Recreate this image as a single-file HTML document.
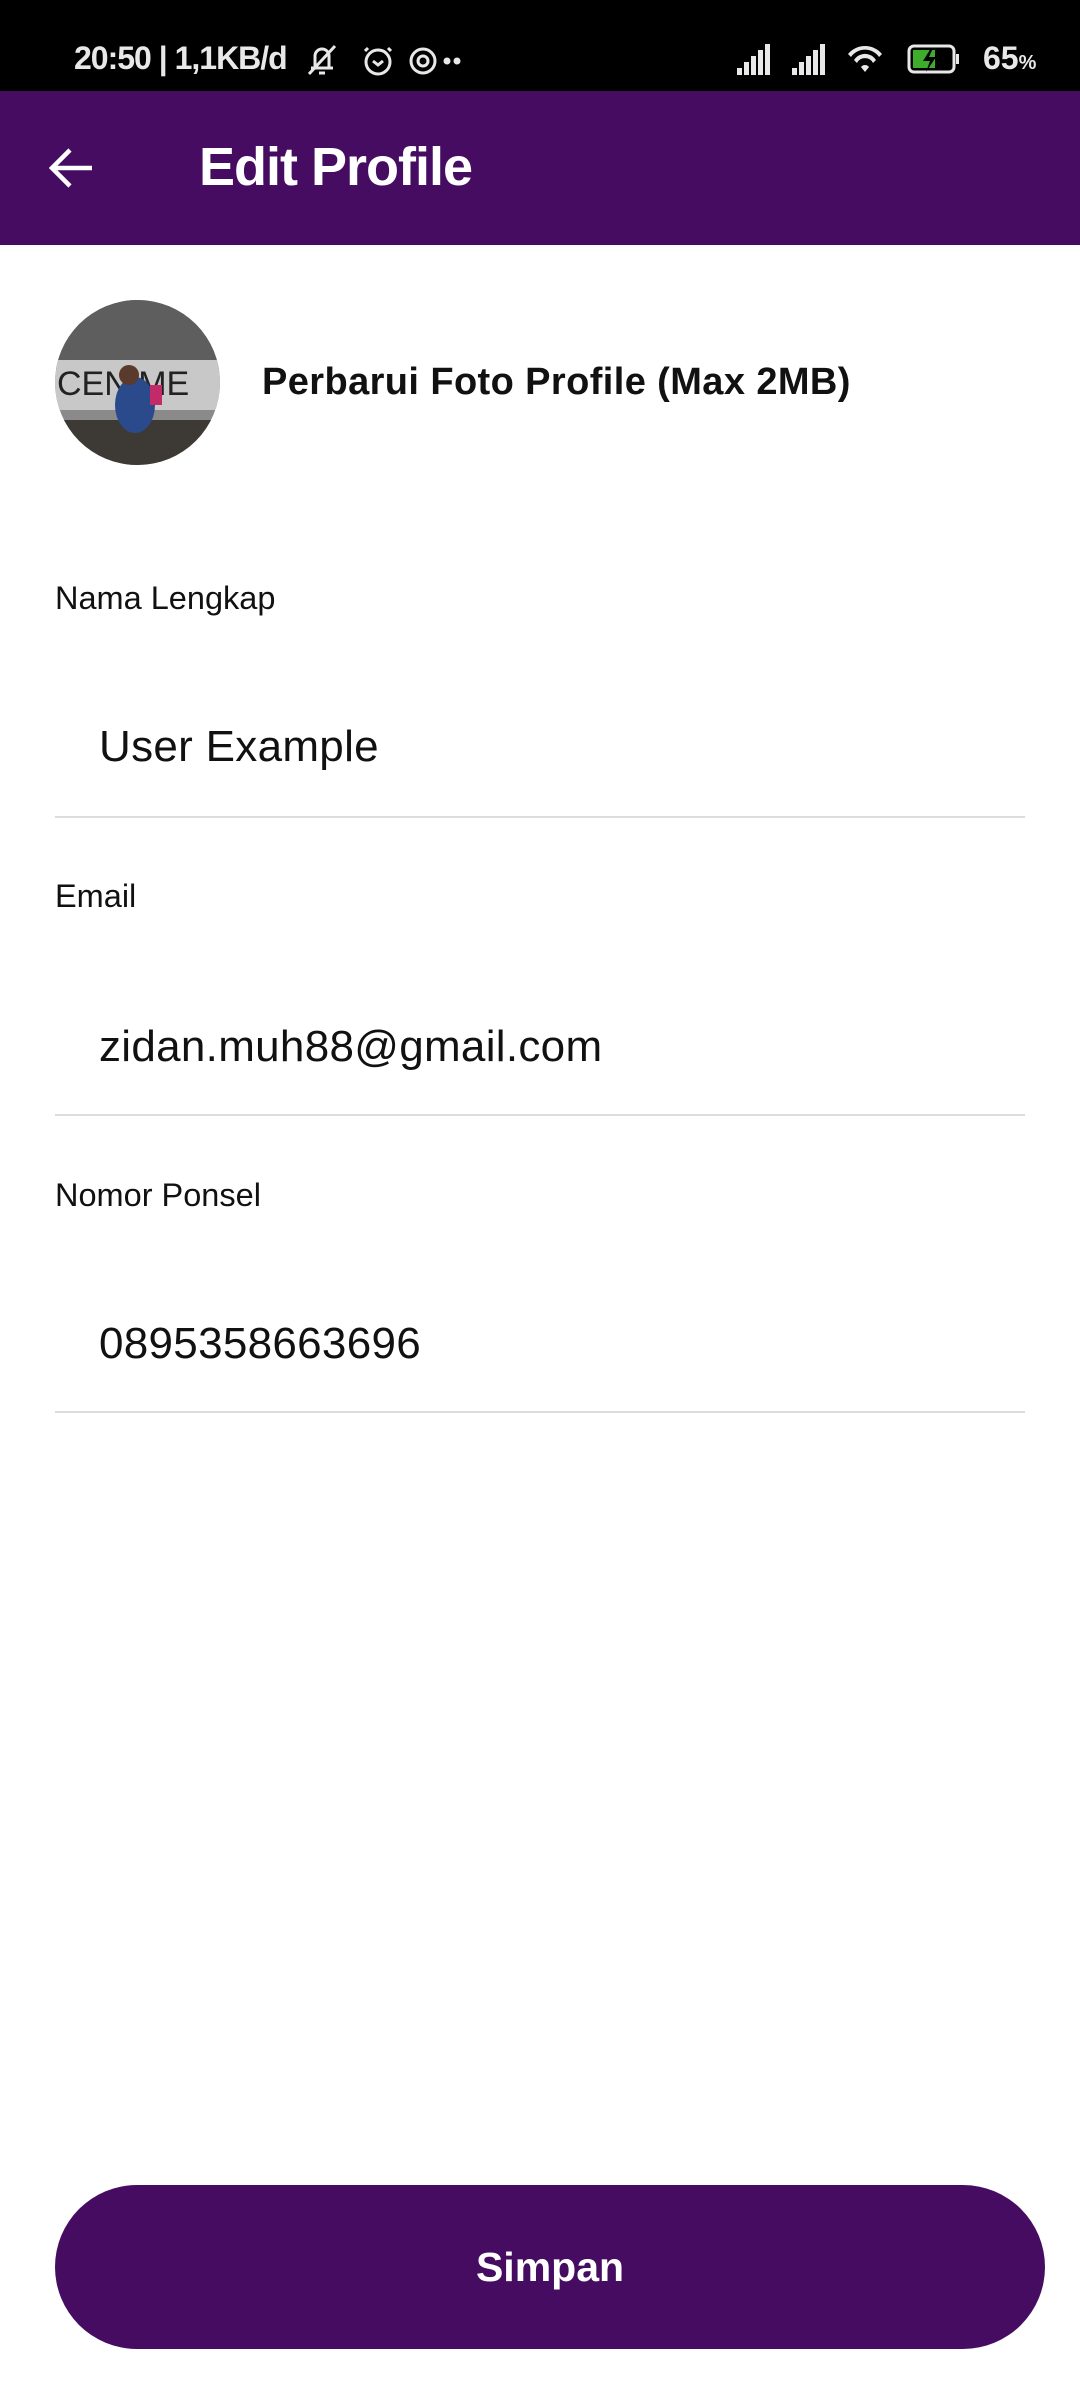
<!DOCTYPE html>
<html><head><meta charset="utf-8"><style>
*{margin:0;padding:0;box-sizing:border-box}
body{width:1080px;height:2400px;background:#fff;font-family:"Liberation Sans",sans-serif;position:relative;overflow:hidden;color:#111}
.abs{position:absolute;white-space:nowrap}
#sb{position:absolute;left:0;top:0;width:1080px;height:91px;background:#000;color:#e8e8e8}
#bar{position:absolute;left:0;top:91px;width:1080px;height:154px;background:#450c62}
.lbl{font-size:32.5px;color:#111;left:55px}
.val{font-size:44px;color:#111;left:99px;letter-spacing:0.3px}
.line{position:absolute;left:55px;width:970px;height:2px;background:#dcdcdc}
</style></head><body>
<div id="sb">
 <div class="abs" style="left:74px;top:40px;font-size:32px;font-weight:bold;letter-spacing:-1px">20:50 | 1,1KB/d</div>
 <svg class="abs" style="left:305px;top:40px" width="170" height="40" viewBox="0 0 170 40" fill="none" stroke="#e8e8e8" stroke-width="3">
  <path d="M6 28h22M10 28V16a7 7 0 0 1 14 0v12M14 33h6M4 34L30 6"/>
  <circle cx="73" cy="22" r="12"/><path d="M68 21l5 4 5-4M63 8l-3 3M83 8l3 3"/>
  <circle cx="118" cy="21" r="12"/><circle cx="118" cy="21" r="5"/>
  <circle cx="142" cy="21" r="2" fill="#e8e8e8"/><circle cx="152" cy="21" r="2" fill="#e8e8e8"/>
 </svg>
 <svg class="abs" style="left:735px;top:40px" width="240" height="38" viewBox="0 0 240 38" fill="#e8e8e8">
  <rect x="2" y="28" width="5" height="7"/><rect x="9" y="22" width="5" height="13"/><rect x="16" y="16" width="5" height="19"/><rect x="23" y="10" width="5" height="25"/><rect x="30" y="4" width="5" height="31"/>
  <rect x="57" y="28" width="5" height="7"/><rect x="64" y="22" width="5" height="13"/><rect x="71" y="16" width="5" height="19"/><rect x="78" y="10" width="5" height="25"/><rect x="85" y="4" width="5" height="31"/>
  <path d="M113 14a22 22 0 0 1 34 0l-3 3a17 17 0 0 0-28 0zM119 20a13 13 0 0 1 22 0l-3 3a9 9 0 0 0-16 0zM126 27a5 5 0 0 1 8 0l-4 5z"/>
  <rect x="174" y="6" width="45" height="26" rx="5" fill="none" stroke="#e8e8e8" stroke-width="3"/>
  <rect x="178" y="10" width="22" height="18" fill="#3dae2b"/>
  <rect x="221" y="14" width="3" height="10"/>
  <path d="M196 8l-8 13h7l-4 11 10-15h-7l4-9z" fill="#000"/>
 </svg>
 <div class="abs" style="left:983px;top:40px;font-size:32px;font-weight:bold">65<span style="font-size:20px">%</span></div>
</div>
<div id="bar">
 <svg class="abs" style="left:48px;top:56px" width="46" height="42" viewBox="0 0 46 42" fill="none" stroke="#fff" stroke-width="4.5"><path d="M44 21H5M22 3L4 21l18 18"/></svg>
 <div class="abs" style="left:199px;top:45px;font-size:54px;font-weight:bold;color:#fff;letter-spacing:-1px">Edit Profile</div>
</div>
<svg class="abs" style="left:55px;top:300px" width="165" height="165" viewBox="0 0 165 165">
 <defs><clipPath id="c"><circle cx="82.5" cy="82.5" r="82.5"/></clipPath></defs>
 <g clip-path="url(#c)">
  <rect width="165" height="165" fill="#8a8a8a"/>
  <rect width="165" height="70" fill="#5e5e5e"/>
  <rect y="60" width="165" height="50" fill="#c8c8c8"/>
  <rect y="120" width="165" height="45" fill="#3d3a36"/>
  <text x="2" y="95" font-size="34" fill="#222" font-family="Liberation Sans">CEN ME</text>
  <ellipse cx="80" cy="105" rx="20" ry="28" fill="#2b4a8c"/>
  <circle cx="74" cy="75" r="10" fill="#5a3a2a"/>
  <rect x="95" y="85" width="12" height="20" fill="#c22a6a"/>
 </g>
</svg>
<div class="abs" style="left:262px;top:361px;font-size:38px;font-weight:bold;color:#111;letter-spacing:0.4px">Perbarui Foto Profile (Max 2MB)</div>
<div class="abs lbl" style="top:580px">Nama Lengkap</div>
<div class="abs val" style="top:722px">User Example</div>
<div class="line" style="top:816px"></div>
<div class="abs lbl" style="top:878px">Email</div>
<div class="abs val" style="top:1022px">zidan.muh88@gmail.com</div>
<div class="line" style="top:1114px"></div>
<div class="abs lbl" style="top:1177px">Nomor Ponsel</div>
<div class="abs val" style="top:1319px">0895358663696</div>
<div class="line" style="top:1411px"></div>
<div class="abs" style="left:55px;top:2185px;width:990px;height:164px;border-radius:82px;background:#450c62;color:#fff;font-size:41px;font-weight:bold;text-align:center;line-height:164px">Simpan</div>
</body></html>
